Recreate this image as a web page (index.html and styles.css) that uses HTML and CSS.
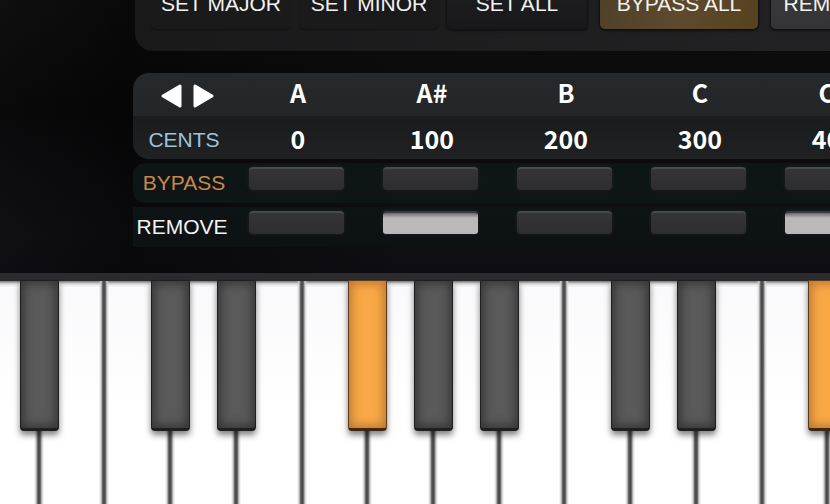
FILE: index.html
```
<!DOCTYPE html>
<html lang="en">
<head>
    <meta charset="UTF-8">
    <title>Scale Tuning</title>
    <link rel="stylesheet" href="styles.css">
</head>
<body>
    <main class="deck">
        <div class="toolbar">
            <button type="button" class="btn flat">SET MAJOR</button>
            <button type="button" class="btn flat">SET MINOR</button>
            <button type="button" class="btn">SET ALL</button>
            <button type="button" class="btn bypass-all">BYPASS ALL</button>
            <button type="button" class="btn remove-all">REMOVE ALL</button>
        </div>

        <table class="tuning">
            <colgroup>
                <col class="col-label">
                <col span="5">
            </colgroup>
            <thead>
                <tr class="notes">
                    <td>
                        <div class="arrows">
                            <button type="button" class="arrow" aria-label="Previous">
                                <svg width="21" height="24" viewBox="0 0 21 24"><path d="M2 12 L19 2 V22 Z"/></svg>
                            </button>
                            <button type="button" class="arrow" aria-label="Next">
                                <svg width="21" height="24" viewBox="0 0 21 24"><path d="M19 12 L2 2 V22 Z"/></svg>
                            </button>
                        </div>
                    </td>
                    <th scope="col">A</th>
                    <th scope="col">A#</th>
                    <th scope="col">B</th>
                    <th scope="col">C</th>
                    <th scope="col">C#</th>
                </tr>
            </thead>
            <tbody>
                <tr class="cents">
                    <th scope="row">CENTS</th>
                    <td>0</td>
                    <td>100</td>
                    <td>200</td>
                    <td>300</td>
                    <td>400</td>
                </tr>
                <tr class="switches bypass">
                    <th scope="row">BYPASS</th>
                    <td><input type="checkbox" class="pad" aria-label="Bypass A"></td>
                    <td><input type="checkbox" class="pad" aria-label="Bypass A#"></td>
                    <td><input type="checkbox" class="pad" aria-label="Bypass B"></td>
                    <td><input type="checkbox" class="pad" aria-label="Bypass C"></td>
                    <td><input type="checkbox" class="pad" aria-label="Bypass C#"></td>
                </tr>
                <tr class="switches remove">
                    <th scope="row">REMOVE</th>
                    <td><input type="checkbox" class="pad" aria-label="Remove A"></td>
                    <td><input type="checkbox" class="pad" aria-label="Remove A#" checked></td>
                    <td><input type="checkbox" class="pad" aria-label="Remove B"></td>
                    <td><input type="checkbox" class="pad" aria-label="Remove C"></td>
                    <td><input type="checkbox" class="pad" aria-label="Remove C#" checked></td>
                </tr>
            </tbody>
        </table>
    </main>

    <div class="keyboard">
        <div class="key"><button type="button" class="white" aria-label="A"></button><button type="button" class="black" aria-label="A#"></button></div>
        <div class="key"><button type="button" class="white" aria-label="B"></button></div>
        <div class="key"><button type="button" class="white" aria-label="C"></button><button type="button" class="black" aria-label="C#"></button></div>
        <div class="key"><button type="button" class="white" aria-label="D"></button><button type="button" class="black" aria-label="D#"></button></div>
        <div class="key"><button type="button" class="white" aria-label="E"></button></div>
        <div class="key"><button type="button" class="white" aria-label="F"></button><button type="button" class="black active" aria-label="F#"></button></div>
        <div class="key"><button type="button" class="white" aria-label="G"></button><button type="button" class="black" aria-label="G#"></button></div>
        <div class="key"><button type="button" class="white" aria-label="A"></button><button type="button" class="black" aria-label="A#"></button></div>
        <div class="key"><button type="button" class="white" aria-label="B"></button></div>
        <div class="key"><button type="button" class="white" aria-label="C"></button><button type="button" class="black" aria-label="C#"></button></div>
        <div class="key"><button type="button" class="white" aria-label="D"></button><button type="button" class="black" aria-label="D#"></button></div>
        <div class="key"><button type="button" class="white" aria-label="E"></button></div>
        <div class="key"><button type="button" class="white" aria-label="F"></button><button type="button" class="black active" aria-label="F#"></button></div>
        <div class="key"><button type="button" class="white" aria-label="G"></button></div>
    </div>
</body>
</html>
```
FILE: styles.css
```
* {
    box-sizing: border-box;
}
body {
    margin: 0;
    min-height: 100vh;
    display: flex;
    flex-direction: column;
    overflow: hidden;
    background: #0a0a0c;
    color: #f2f2f2;
    font-family: "Liberation Sans", Arial, sans-serif;
    font-size: 21px;
}
button {
    margin: 0;
    padding: 0;
    border: none;
    font: inherit;
    color: inherit;
    cursor: pointer;
}

/* control panel */
.deck {
    padding: 0 0 26px 133px;
    overflow: hidden;
    background:
        linear-gradient(to right, transparent, rgba(0, 0, 0, 0.4) 15%, transparent 50%),
        linear-gradient(#0f0f10, #09090a 40%, #101014 85%, #0e0d13);
}
.toolbar {
    display: flex;
    gap: 8px;
    margin: -40px 0 22px 2px;
    padding: 18px 0 22px 16px;
    white-space: nowrap;
    background: linear-gradient(to right, #19191a, #222224);
    border-bottom-left-radius: 18px;
}
.btn {
    flex: none;
    width: 140px;
    height: 51px;
    border-radius: 5px;
    background: linear-gradient(#1f2022, #18181a);
    box-shadow: 0 1px 2px 1px #101011;
}
.btn.flat {
    background: #1a1a1b;
    box-shadow: 0 1px 1px #131314;
}
.btn.bypass-all,
.btn.remove-all {
    width: 158px;
    margin-left: 5px;
}
.btn.bypass-all {
    background: linear-gradient(100deg, #4f4029, #5d4a2d 50%, #57421f);
}
.btn.remove-all {
    background: linear-gradient(#3b3b3d, #343436);
}

/* tuning table */
.tuning {
    width: 768px;
    table-layout: fixed;
    border-spacing: 0;
}
.col-label {
    width: 98px;
}
.tuning th,
.tuning td {
    padding: 0;
    text-align: center;
    font-weight: normal;
}
.notes > *,
.cents > * {
    height: 43px;
}
.notes > * {
    background: linear-gradient(#26292b, #232527);
}
.cents > * {
    background: linear-gradient(#191b1c, #202123);
}
.notes td {
    border-top-left-radius: 16px;
}
.tuning .cents th {
    padding: 4px 0 0 4px;
    border-bottom-left-radius: 16px;
    color: #9ec3da;
}
.tuning .notes th,
.tuning .cents td {
    font-family: "Noto Sans CJK SC", "Noto Sans", sans-serif;
    font-size: 25px;
    font-weight: bold;
    line-height: 36px;
    color: #fff;
}
.tuning .notes th {
    padding-bottom: 6px;
}
.arrows {
    display: flex;
    justify-content: center;
    gap: 11px;
    padding: 3px 0 0 11px;
}
.arrow {
    display: flex;
    background: none;
}
.arrow svg {
    fill: #fff;
    stroke: #fff;
    stroke-width: 3;
    stroke-linejoin: round;
}
.switches > * {
    height: 44px;
    border-top: 4px solid transparent;
    background: #0e1517;
    background-clip: padding-box;
}
.tuning .bypass th {
    padding-left: 4px;
    border-top-left-radius: 14px;
    border-bottom-left-radius: 12px;
    color: #c98844;
}
.remove > * {
    background: linear-gradient(#0d1416, #0d1113);
    background-clip: padding-box;
}
.tuning .switches td {
    padding-top: 4px;
    vertical-align: top;
}
.pad {
    appearance: none;
    display: block;
    width: 95px;
    height: 23px;
    margin: 0 0 0 18px;
    border-top: 2px solid #464b4e;
    border-radius: 4px;
    background: linear-gradient(#353538, #2d2c2f);
    box-shadow: 0 0 3px 1px #1b1d1f;
    cursor: pointer;
}
.pad:checked {
    border-top-color: #3a3a3c;
    border-radius: 3px;
    background: linear-gradient(#6a686a, #bbb8ba 5px) padding-box;
}

/* piano keys, the outer ones run past the window edges */
.keyboard {
    flex: 1;
    display: flex;
    min-height: 231px;
    margin: 0 -63px 0 -27px;
    border-top: 8px solid #2b2b2e;
}
.key {
    position: relative;
    flex: 1;
    display: flex;
}
.white {
    flex: 1;
    background:
        linear-gradient(to right, #4d4d4d 1px, #8a8a8a 2px, #d0d0d0 3px, transparent 5px),
        linear-gradient(to left, #4d4d4d 1px, #8a8a8a 2px, #d0d0d0 3px, transparent 5px),
        linear-gradient(#77777a, #dcdcde 3px, #fafafc 6px, #fff 130px);
}
.black {
    position: absolute;
    top: -1px;
    left: calc(100% - 19px);
    z-index: 1;
    width: 39px;
    height: 151px;
    border: 1px solid #1f1f1f;
    border-bottom-width: 3px;
    border-radius: 1px 1px 4px 4px;
    background: #5a5a5a;
    box-shadow: inset 0 0 10px 3px #363636, 0 4px 6px rgba(0, 0, 0, 0.5);
}
.black.active {
    border-color: #5a3c1b;
    border-bottom-color: #3d2711;
    background: #f9a845;
    box-shadow: inset 0 0 10px 3px #bb7a33, 0 4px 6px rgba(0, 0, 0, 0.5);
}
```
